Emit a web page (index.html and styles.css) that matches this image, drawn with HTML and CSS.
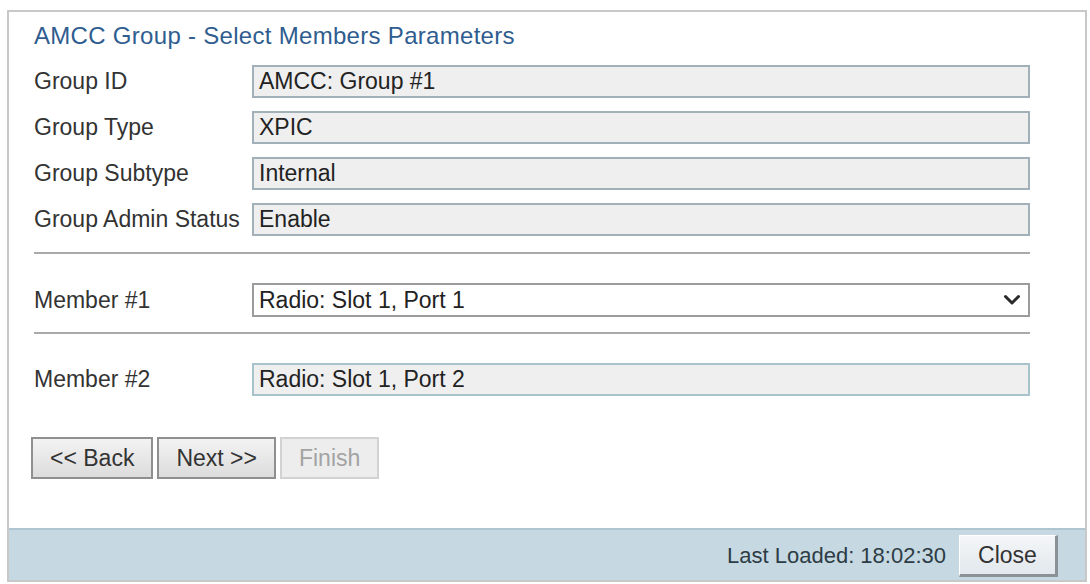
FILE: index.html
```html
<!DOCTYPE html>
<html>
<head>
<meta charset="utf-8">
<link rel="stylesheet" href="styles.css">
</head>
<body>
<div class="dialog">
  <div class="content">
    <h1 class="title">AMCC Group - Select Members Parameters</h1>
    <div class="fields">
      <span class="label">Group ID</span><div class="field">AMCC: Group #1</div>
      <span class="label">Group Type</span><div class="field">XPIC</div>
      <span class="label">Group Subtype</span><div class="field">Internal</div>
      <span class="label">Group Admin Status</span><div class="field">Enable</div>
    </div>
    <hr class="sep">
    <div class="row row-m1">
      <span class="label">Member #1</span>
      <div class="select">
        <span>Radio: Slot 1, Port 1</span>
        <svg class="chev" width="18" height="12" viewBox="0 0 18 12"><path d="M2.5 2.5 L9 9 L15.5 2.5" fill="none" stroke="#2a2a2a" stroke-width="3" stroke-linecap="round" stroke-linejoin="round"/></svg>
      </div>
    </div>
    <hr class="sep sep2">
    <div class="row row-m2">
      <span class="label">Member #2</span>
      <div class="field field-m2">Radio: Slot 1, Port 2</div>
    </div>
    <div class="buttons">
      <button class="btn">&lt;&lt; Back</button>
      <button class="btn">Next &gt;&gt;</button>
      <button class="btn btn-disabled">Finish</button>
    </div>
  </div>
  <div class="footer">
    <span class="loaded">Last Loaded: 18:02:30</span>
    <button class="close">Close</button>
  </div>
</div>
</body>
</html>
```

FILE: styles.css
```css
body {
  margin: 0;
  padding: 10px 0 0 7px;
  background: #ffffff;
  font-family: "Liberation Sans", Arial, sans-serif;
  color: #2b2b2b;
}

.dialog {
  width: 1080px;
  height: 572px;
  box-sizing: border-box;
  border: 2px solid #c8c8c8;
  display: flex;
  flex-direction: column;
  background: #ffffff;
}

.content {
  flex: 1;
  padding: 10px 55px 0 25px;
}

.title {
  margin: 0;
  font-size: 24px;
  line-height: 28px;
  font-weight: normal;
  letter-spacing: 0.3px;
  color: #2f5d90;
}

.fields {
  display: grid;
  grid-template-columns: 218px 1fr;
  row-gap: 13px;
  margin-top: 15px;
}

.label {
  font-size: 23px;
  color: #333333;
  align-self: center;
}

.field {
  height: 33px;
  box-sizing: border-box;
  border: 2px solid #a2b0ba;
  background: #efefef;
  padding: 0 5px;
  font-size: 23px;
  line-height: 29px;
  color: #222222;
}

.sep {
  border: 0;
  height: 2px;
  background: #a9a9a9;
  margin: 16px 0 0 0;
}

.sep2 {
  margin-top: 15px;
}

.row {
  display: grid;
  grid-template-columns: 218px 1fr;
}

.row-m1 {
  margin-top: 29px;
}

.row-m2 {
  margin-top: 29px;
}

.select {
  height: 34px;
  box-sizing: border-box;
  border: 2px solid #9c9c9c;
  background: #ffffff;
  padding: 0 7px 0 5px;
  font-size: 23px;
  line-height: 30px;
  color: #222222;
  display: flex;
  justify-content: space-between;
  align-items: center;
}

.chev {
  display: block;
}

.field-m2 {
  border-color: #a8c3cc;
}

.buttons {
  display: flex;
  gap: 4px;
  margin: 41px 0 0 -3px;
}

.btn {
  height: 42px;
  padding: 0 17px;
  font-family: "Liberation Sans", Arial, sans-serif;
  font-size: 23px;
  color: #333333;
  background: linear-gradient(#f3f3f3, #dcdcdc);
  border: 2px solid #8f8f8f;
}

.btn-disabled {
  color: #a3a3a3;
  background: #ededed;
  border-color: #d2d2d2;
}

.footer {
  height: 52px;
  box-sizing: border-box;
  border-top: 2px solid #afc5d1;
  background: #c6d8e1;
  display: flex;
  justify-content: flex-end;
  align-items: center;
  gap: 13px;
  padding: 2px 27px 0 0;
}

.loaded {
  font-size: 22px;
  color: #2d3c45;
}

.close {
  width: 99px;
  height: 42px;
  font-family: "Liberation Sans", Arial, sans-serif;
  font-size: 23px;
  color: #333333;
  background: linear-gradient(#f4f6f8, #e2e8ed);
  border-style: solid;
  border-width: 1px 3px 3px 1px;
  border-color: #ffffff #8a9298 #8a9298 #ffffff;
}
```
